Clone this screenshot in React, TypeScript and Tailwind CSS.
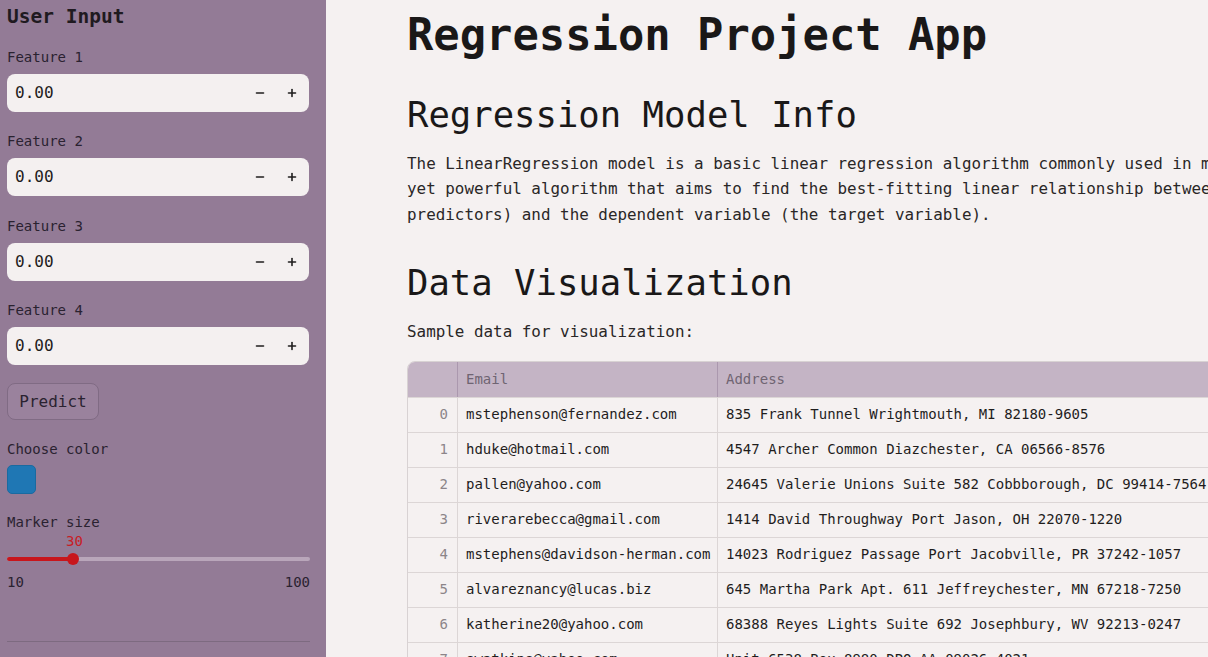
import React from "react";
import { Minus, Plus } from "lucide-react";

const rows = [
  ["0", "mstephenson@fernandez.com", "835 Frank Tunnel Wrightmouth, MI 82180-9605"],
  ["1", "hduke@hotmail.com", "4547 Archer Common Diazchester, CA 06566-8576"],
  ["2", "pallen@yahoo.com", "24645 Valerie Unions Suite 582 Cobbborough, DC 99414-7564"],
  ["3", "riverarebecca@gmail.com", "1414 David Throughway Port Jason, OH 22070-1220"],
  ["4", "mstephens@davidson-herman.com", "14023 Rodriguez Passage Port Jacobville, PR 37242-1057"],
  ["5", "alvareznancy@lucas.biz", "645 Martha Park Apt. 611 Jeffreychester, MN 67218-7250"],
  ["6", "katherine20@yahoo.com", "68388 Reyes Lights Suite 692 Josephbury, WV 92213-0247"],
  ["7", "swatkins@yahoo.com", "Unit 6538 Box 8980 DPO AA 09026-4021"],
];

function NumberInput({ label }: { label: string }) {
  return (
    <div className="flex flex-col">
      <div className="h-[20px] text-[14px] leading-[20px] text-[#2a2230]">{label}</div>
      <div className="mt-[7px] flex h-[38px] w-[302px] items-center rounded-[8px] bg-[#f4f0f0] pl-[8px] pr-[6px]">
        <span className="flex-1 text-[16px] text-[#1f1d1d]">0.00</span>
        <div className="flex w-[22px] justify-center text-[#1f1d1d]">
          <Minus size={12} strokeWidth={3.2} />
        </div>
        <div className="ml-[10px] flex w-[22px] justify-center text-[#1f1d1d]">
          <Plus size={12} strokeWidth={3.2} />
        </div>
      </div>
    </div>
  );
}

export default function App() {
  return (
    <div className="flex h-[657px] w-[1208px] overflow-hidden bg-[#f5f1f1] [font-family:'DejaVu_Sans_Mono',monospace] text-[#1f1d1d]">
      {/* Sidebar */}
      <aside className="flex w-[326px] shrink-0 flex-col bg-[#937b96] pl-[7px] pt-[5px]">
        <h2 className="h-[24px] text-[19.5px] font-semibold leading-[24px] text-[#1f1a20]">User Input</h2>
        <div className="mt-[18px] flex flex-col gap-[19.4px]">
          <NumberInput label="Feature 1" />
          <NumberInput label="Feature 2" />
          <NumberInput label="Feature 3" />
          <NumberInput label="Feature 4" />
        </div>
        <button className="mt-[18px] h-[37px] w-[92px] rounded-[8px] border border-[#806b84] bg-[#9a829d] text-[16px] text-[#2a2230]">
          Predict
        </button>
        <div className="mt-[19px] h-[20px] text-[14px] leading-[20px] text-[#2a2230]">Choose color</div>
        <div className="mt-[5.5px] h-[29px] w-[29px] rounded-[5px] border border-[#1a6aa0] bg-[#1f77b4]" />
        <div className="mt-[18.5px] h-[20px] text-[14px] leading-[20px] text-[#2a2230]">Marker size</div>
        <div className="relative h-[40px] w-[303px]">
          <div className="absolute left-[59px] top-[-1px] text-[14px] leading-[20px] text-[#c81d25]">30</div>
          <div className="absolute left-0 top-[25px] h-[4px] w-[303px] rounded-full bg-[#b9a6ba]" />
          <div className="absolute left-0 top-[25px] h-[4px] w-[67px] rounded-full bg-[#c8161c]" />
          <div className="absolute left-[60px] top-[21px] h-[12px] w-[12px] rounded-full bg-[#c8161c]" />
        </div>
        <div className="flex w-[303px] justify-between text-[14px] leading-[20px] text-[#2a2230]">
          <span>10</span>
          <span>100</span>
        </div>
        <div className="mt-[49px] h-px w-[303px] bg-[#7d6a80]" />
      </aside>

      {/* Main */}
      <main className="min-w-0 flex-1 overflow-hidden pl-[81px] pt-[8px]">
        <h1 className="h-[53px] whitespace-nowrap text-[43.8px] font-bold leading-[53px] text-[#1a1818]">
          Regression Project App
        </h1>
        <h2 className="mt-[32px] h-[43px] whitespace-nowrap text-[35.6px] font-normal leading-[43px] text-[#1a1818]">
          Regression Model Info
        </h2>
        <div className="mt-[14.5px] whitespace-nowrap text-[15.9px] leading-[25.6px] text-[#2a2727]">
          <div>The LinearRegression model is a basic linear regression algorithm commonly used in machine learning. It is a simple</div>
          <div>yet powerful algorithm that aims to find the best-fitting linear relationship between the independent variables (features or</div>
          <div>predictors) and the dependent variable (the target variable).</div>
        </div>
        <h2 className="mt-[34px] h-[43px] whitespace-nowrap text-[35.6px] font-normal leading-[43px] text-[#1a1818]">
          Data Visualization
        </h2>
        <div className="mt-[14.5px] whitespace-nowrap text-[15.9px] leading-[25.6px] text-[#2a2727]">
          Sample data for visualization:
        </div>
        <div className="mt-[16.5px] w-[1000px] overflow-hidden rounded-tl-[8px] border border-[#d8d2d3]">
          <div className="flex h-[35px] bg-[#c4b4c5] text-[14px] text-[#6f6472]">
            <div className="w-[50px] shrink-0 border-r border-[#ab98ae]" />
            <div className="flex w-[260px] shrink-0 items-center border-r border-[#ab98ae] pl-[8px]">Email</div>
            <div className="flex flex-1 items-center pl-[8px]">Address</div>
          </div>
          {rows.map((r) => (
            <div key={r[0]} className="flex h-[35px] border-t border-[#dcd6d6] text-[14px]">
              <div className="flex w-[50px] shrink-0 items-center justify-end border-r border-[#dcd6d6] pr-[9px] text-[#8c8589]">
                {r[0]}
              </div>
              <div className="flex w-[260px] shrink-0 items-center whitespace-nowrap border-r border-[#dcd6d6] pl-[8px] text-[#1f1d1d]">
                {r[1]}
              </div>
              <div className="flex flex-1 items-center whitespace-nowrap pl-[8px] text-[#1f1d1d]">{r[2]}</div>
            </div>
          ))}
        </div>
      </main>
    </div>
  );
}
